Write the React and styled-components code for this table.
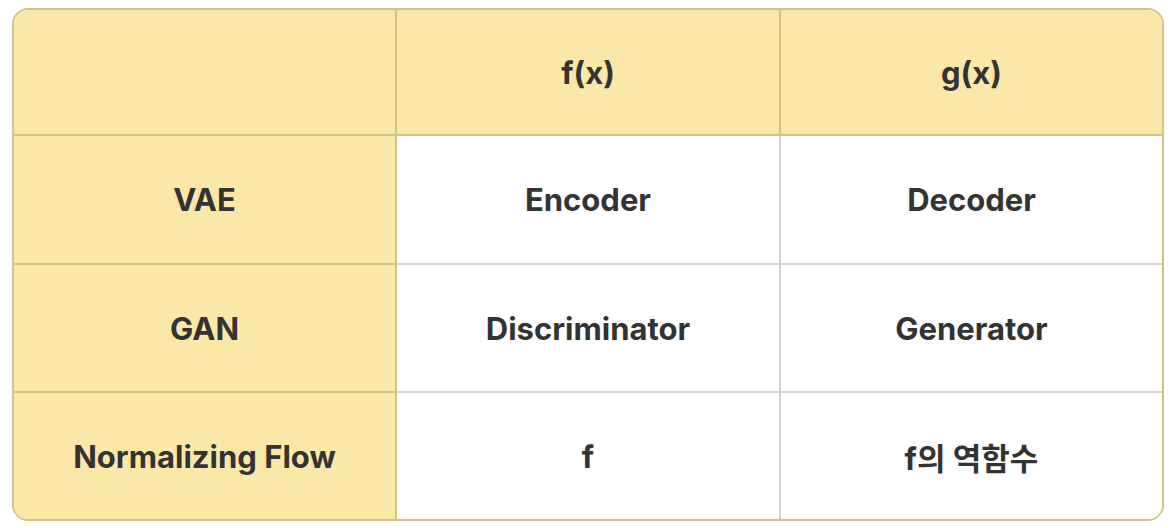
import React from 'react';
import styled, { createGlobalStyle } from 'styled-components';

const GlobalStyle = createGlobalStyle`
  body {
    margin: 0;
    background: #ffffff;
    font-family: Inter, "Noto Sans CJK KR", sans-serif;
  }
`;

const Page = styled.div`
  padding: 8px 10px 8px 12px;
`;

const Table = styled.div`
  display: grid;
  grid-template-columns: 383px 384px 1fr;
  grid-template-rows: 126px 129px 128px 126px;
  width: 1152px;
  border: 2px solid #d3c387;
  border-radius: 16px;
  overflow: hidden;
  box-sizing: border-box;
`;

const Cell = styled.div`
  display: flex;
  align-items: center;
  justify-content: center;
  font-size: 31px;
  font-weight: 700;
  color: #333333;
  background: ${p => (p.$head ? '#fbe8a8' : '#ffffff')};
  border-right: ${p => (p.$last ? 'none' : `2px solid ${p.$head ? '#d3c387' : '#d4d4d4'}`)};
  border-bottom: ${p => (p.$bottom ? 'none' : `2px solid ${p.$head ? '#d3c387' : '#d4d4d4'}`)};
`;

const rows = [
  ['', 'f(x)', 'g(x)'],
  ['VAE', 'Encoder', 'Decoder'],
  ['GAN', 'Discriminator', 'Generator'],
  ['Normalizing Flow', 'f', 'f의 역함수'],
];

export default function App() {
  return (
    <Page>
      <GlobalStyle />
      <Table>
        {rows.map((row, r) =>
          row.map((text, c) => (
            <Cell
              key={`${r}-${c}`}
              $head={r === 0 || c === 0}
              $last={c === 2}
              $bottom={r === rows.length - 1}
            >
              {text}
            </Cell>
          ))
        )}
      </Table>
    </Page>
  );
}
